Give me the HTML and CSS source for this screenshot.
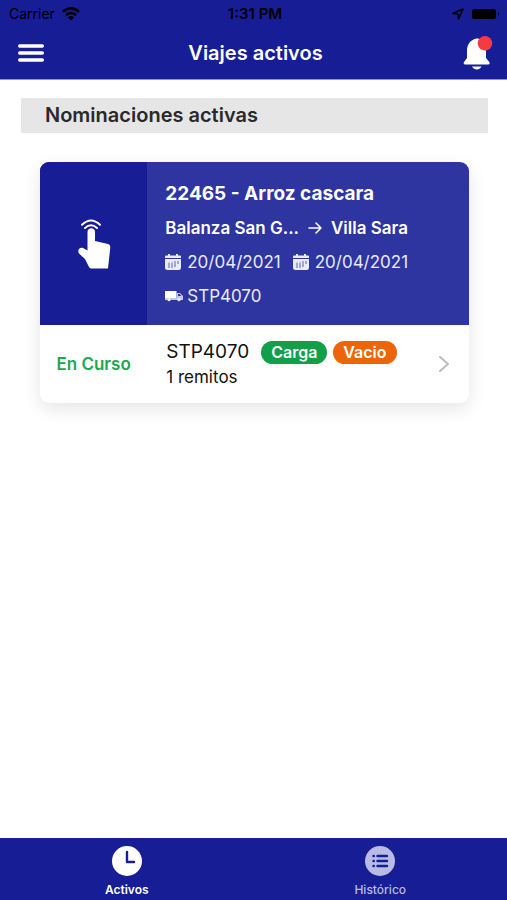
FILE: index.html
```html
<!DOCTYPE html>
<html lang="es">
<head>
<meta charset="utf-8">
<meta name="viewport" content="width=device-width, initial-scale=1">
<title>Viajes activos</title>
<link rel="stylesheet" href="styles.css">
</head>
<body>
<header class="top">
  <div class="status">
    <div class="status-side">
      <span>Carrier</span>
      <svg width="18" height="14" viewBox="0 0 18 14" fill="none" stroke="#000" stroke-width="2.6"><path d="M1 4.8Q9-2 17 4.8M3.9 8Q9 3.6 14.1 8"/><path d="M9 13.6 5.9 10.4Q9 7.8 12.1 10.4Z" fill="#000" stroke="none"/></svg>
    </div>
    <span class="time">1:31 PM</span>
    <div class="status-side status-right">
      <svg width="12" height="12" viewBox="0 0 12 12" fill="none" stroke="#000" stroke-width="1.5" stroke-linejoin="round"><path d="M11 1 1 5.4 6 6 6.6 11Z"/></svg>
      <svg width="30" height="14" viewBox="0 0 30 14"><rect x="1" y="2" width="24" height="10" rx="2.5"/><path d="M27 5v4q2-2 0-4Z"/></svg>
    </div>
  </div>
  <div class="nav">
    <button class="icon-button" aria-label="Menú">
      <svg width="26" height="20" viewBox="0 0 26 20" stroke="#fff" stroke-width="3.4" stroke-linecap="round"><path d="M1.7 3H24.3M1.7 10H24.3M1.7 17H24.3"/></svg>
    </button>
    <h1>Viajes activos</h1>
    <button class="icon-button" aria-label="Notificaciones">
      <svg width="30" height="34" viewBox="0 0 30 34"><path fill="#fff" d="M13 2.5c-5.5 1.500-9 6-9 12v7.500L1 26q-1.200 2.500 1.400 2.500h22.500q2.600 0 1.400-2.500L23 22v-7.500c0-6-4-10.500-8-12ZM9 30.500h9.500q-1.500 3-4.700 3T9 30.500Z"/><circle cx="22" cy="7.300" r="7.300" fill="#f53a40"/></svg>
    </button>
  </div>
</header>

<main>
  <h2>Nominaciones activas</h2>
  <article class="card">
    <div class="summary">
      <div class="touch">
        <svg width="34" height="50" viewBox="0 0 34 50"><g fill="none" stroke="#fff" stroke-width="2" stroke-linecap="round"><path d="M5 5.800Q14-2.800 23 5.800M8 9Q14 3.600 20 9"/></g><path fill="#fff" d="M10.500 13c0-5 7.500-5 7.500 0v9l13 3q2.500.7 2.300 3.500L31 49.500H14.500q-1.500 0-2.500-1.500L8 40 2.500 35C-.5 32 2.500 27.500 6 29l4.500 2.500Z"/></svg>
      </div>
      <div class="details">
        <h3>22465 - Arroz cascara</h3>
        <div class="row route">
          <span>Balanza San G...</span>
          <svg width="14" height="12" viewBox="0 0 14 12" fill="none" stroke="#fff" stroke-width="1.500" stroke-linecap="round" stroke-linejoin="round"><path d="M1 6H13M8 1l5 5-5 5"/></svg>
          <span>Villa Sara</span>
        </div>
        <div class="row dates">
          <span class="item"><svg width="16" height="16" viewBox="0 0 16 16"><path fill="#e8eaff" d="M0 2.500Q0 1.500 1 1.500H3V0H5V1.500H11V0H13V1.500H15Q16 1.500 16 2.500V4H0ZM0 5H16V13.500Q16 16 13.500 16H2.500Q0 16 0 13.500Z"/><path fill="none" stroke="#7779c3" stroke-width="1.200" d="M4 8.500V14M7 8.500V14M10 7V13M13 7V10"/></svg>20/04/2021</span>
          <span class="item"><svg width="16" height="16" viewBox="0 0 16 16"><path fill="#e8eaff" d="M0 2.500Q0 1.500 1 1.500H3V0H5V1.500H11V0H13V1.500H15Q16 1.500 16 2.500V4H0ZM0 5H16V13.500Q16 16 13.500 16H2.500Q0 16 0 13.500Z"/><path fill="none" stroke="#7779c3" stroke-width="1.200" d="M4 8.500V14M7 8.500V14M10 7V13M13 7V10"/></svg>20/04/2021</span>
        </div>
        <div class="row">
          <span class="item truck"><svg width="18" height="12" viewBox="0 0 18 12"><path fill="#fff" d="M0 1H11.500V8H0Z"/><path fill="#c4c7ee" d="M0 8H18V10H0ZM11.500 3H15L18 6V8H11.500Z"/><path fill="#2e34a0" d="M13 4H14.700L16.300 6H13Z"/><circle cx="4" cy="9.700" r="1.600" fill="#e8eaff"/><circle cx="14" cy="9.700" r="1.600" fill="#e8eaff"/></svg>STP4070</span>
        </div>
      </div>
    </div>
    <a class="trip" href="#viaje">
      <span class="state">En Curso</span>
      <span class="trip-info">
        <span class="plate">STP4070 <span class="tags"><span class="tag">Carga</span><span class="tag empty">Vacio</span></span></span>
        <span class="notes">1 remitos</span>
      </span>
      <span class="chevron"><svg width="10" height="16" viewBox="0 0 10 16" fill="none" stroke="#bcbcbe" stroke-width="2" stroke-linecap="round" stroke-linejoin="round"><path d="M1 1l8 7-8 7"/></svg></span>
    </a>
  </article>
</main>

<nav class="tabs">
  <a class="tab active" href="#activos">
    <svg width="30" height="30" viewBox="0 0 30 30"><circle cx="15" cy="15" r="15" fill="#fff"/><path d="M15 6V16H22" fill="none" stroke="#171d94" stroke-width="2.400" stroke-linecap="round" stroke-linejoin="round"/></svg>
    <span>Activos</span>
  </a>
  <a class="tab" href="#historico">
    <svg width="30" height="30" viewBox="0 0 30 30"><circle cx="15" cy="15" r="15" fill="#b9bbe4"/><g stroke="#171d94" stroke-width="2.400" stroke-linecap="round"><path d="M12.500 10H22M12.500 15H22M12.500 20H22M8.500 10h.3M8.500 15h.3M8.500 20h.3"/></g></svg>
    <span>Histórico</span>
  </a>
</nav>
</body>
</html>
```
FILE: styles.css
```css
* { box-sizing: border-box; }

body {
  margin: 0;
  min-height: 100vh;
  display: flex;
  flex-direction: column;
  background: #fff;
  color: #111;
  font-family: Inter, "Liberation Sans", sans-serif;
}

h1, h2, h3 { margin: 0; }
svg { display: block; flex: none; }
a { color: inherit; text-decoration: none; }

.top {
  background: #171d94;
  border-bottom: 1px solid #8f93cf;
}

.status {
  display: flex;
  align-items: center;
  height: 27px;
  padding: 0 6px 0 9px;
  color: #000;
  font-size: 14px;
}
.status-side { flex: 1; display: flex; align-items: center; gap: 7px; }
.status-right { justify-content: flex-end; }
.time { font-size: 15px; font-weight: 600; }

.nav {
  display: flex;
  align-items: center;
  justify-content: space-between;
  height: 52px;
  padding: 0 14px 0 18px;
}
.nav h1 {
  color: #fff;
  font-size: 20px;
  font-weight: 600;
}
.icon-button {
  width: 30px;
  padding: 0;
  border: 0;
  background: none;
  cursor: pointer;
}

main { flex: 1; padding: 18px 19px 18px 21px; }

h2 {
  padding: 0 24px;
  background: #e6e6e6;
  color: #29292b;
  font-size: 20px;
  font-weight: 600;
  line-height: 35px;
}

.card {
  margin: 29px 19px 0;
  overflow: hidden;
  border-radius: 9px;
  background: #fff;
  box-shadow: 0 6px 18px rgba(0, 0, 0, 0.1);
}

.summary {
  display: grid;
  grid-template-columns: 1fr 3fr;
  background: #2e34a0;
  color: #fff;
}
.touch {
  display: flex;
  align-items: center;
  justify-content: center;
  background: #171d94;
}
.details { padding: 15px 18px 12px; }
.details h3 {
  font-size: 19px;
  font-weight: 700;
  line-height: 34px;
}
.row {
  display: flex;
  align-items: center;
  font-size: 17px;
  line-height: 34px;
  color: #e8eaff;
}
.route { gap: 9px; color: #fff; font-weight: 600; }
.dates { gap: 12px; }
.item { display: flex; align-items: center; gap: 6px; }
.truck { gap: 4px; }

.trip {
  display: grid;
  grid-template-columns: 25% 1fr auto;
  align-items: center;
  padding: 14px 0;
}
.state {
  color: #1ba853;
  font-size: 17px;
  font-weight: 600;
  text-align: center;
}
.trip-info { padding-left: 19px; }
.chevron { padding-right: 20px; }
.plate, .tags { display: flex; align-items: center; }
.plate { gap: 12px; font-size: 19px; line-height: 26px; }
.tags { gap: 6px; }
.tag {
  padding: 0 10px;
  border-radius: 12px;
  background: #11a049;
  color: #fff;
  font-size: 16px;
  font-weight: 600;
  line-height: 23px;
}
.empty { background: #ec6608; }
.notes { display: block; font-size: 17px; line-height: 24px; }

.tabs {
  display: flex;
  height: 62px;
  background: #171d94;
}
.tab {
  flex: 1;
  display: flex;
  flex-direction: column;
  align-items: center;
  gap: 6px;
  padding-top: 8px;
  color: #b9bbe4;
  font-size: 12px;
  font-weight: 500;
  line-height: 16px;
}
.active { color: #fff; font-weight: 600; }
```
